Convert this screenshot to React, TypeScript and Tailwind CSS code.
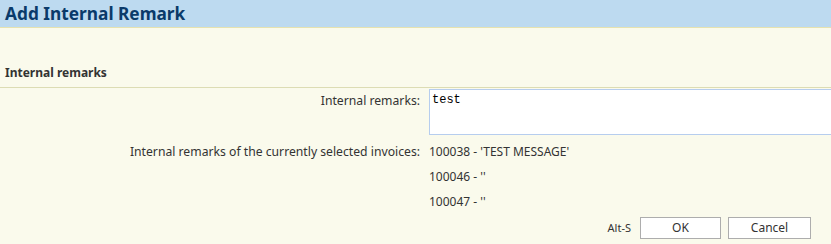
export default function App() {
  const values = ["100038 - 'TEST MESSAGE'", "100046 - ''", "100047 - ''"];

  return (
    <div className="w-[831px] h-[244px] overflow-hidden bg-[#fafaec] font-['Noto_Sans',sans-serif] text-[12px] text-[#333]">
      <div className="h-[28px] bg-[#bddaf0] border-b border-[#e6e2b0] px-[5px] flex items-center">
        <h1 className="text-[17.3px] font-bold text-[#0a3a6a] leading-none">Add Internal Remark</h1>
      </div>

      <div className="pt-[36px]">
        <div className="px-[5px] pb-[5px] border-b border-[#dcdcb4] font-bold text-[12px] text-[#333] leading-[18px]">
          Internal remarks
        </div>

        <div className="grid grid-cols-[420px_1fr] gap-x-[9px] pt-[1px]">
          <div className="text-right pt-[3px] text-[12.2px]">Internal remarks:</div>
          <textarea
            defaultValue="test"
            className="w-[440px] h-[46px] bg-white border border-[#b6cdee] px-[2px] py-[1px] font-['Liberation_Mono',monospace] text-[12px] text-black resize-none outline-none"
          />

          <div className="text-right pt-[8px] text-[12.2px]">Internal remarks of the currently selected invoices:</div>
          <div className="pt-[8px] flex flex-col gap-[7px] leading-[18px]">
            {values.map((v) => (
              <div key={v}>{v}</div>
            ))}
          </div>
        </div>

        <div className="flex justify-end items-center gap-[7px] pr-[20px] mt-[6px]">
          <span className="text-[11px] mr-[2px]">Alt-S</span>
          <button className="w-[81px] h-[22px] bg-white border border-[#adadad] text-[12px]">OK</button>
          <button className="w-[83px] h-[22px] bg-white border border-[#adadad] text-[12px]">Cancel</button>
        </div>
      </div>
    </div>
  );
}
